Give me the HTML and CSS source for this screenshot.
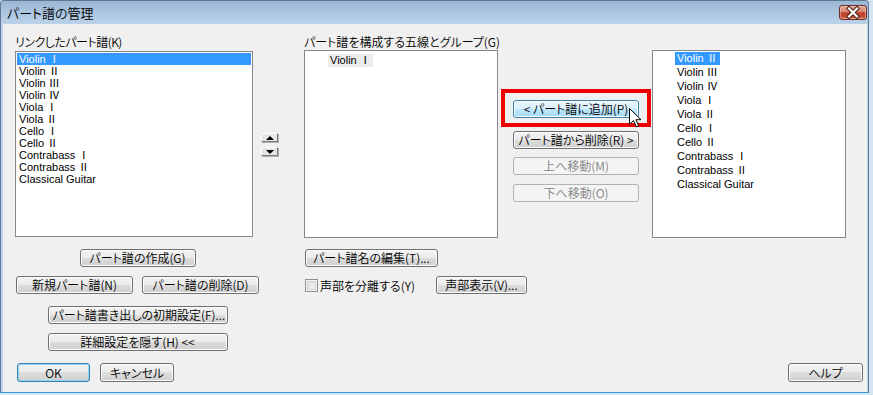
FILE: index.html
```html
<!DOCTYPE html>
<html lang="ja">
<head>
<meta charset="utf-8">
<title>パート譜の管理</title>
<link rel="stylesheet" href="styles.css">
</head>
<body>
<div class="window">
  <div class="titlebar">
    <span class="title">パート譜の管理</span>
    <button class="close" aria-label="閉じる">
      <svg width="26" height="13" viewBox="0 0 26 13">
        <path d="M9 2.5 L17 10.5 M17 2.5 L9 10.5" stroke="#4a1d16" stroke-width="4.2" stroke-linecap="square" fill="none"/>
        <path d="M9 2.5 L17 10.5 M17 2.5 L9 10.5" stroke="#ffffff" stroke-width="2.2" stroke-linecap="square" fill="none"/>
      </svg>
    </button>
  </div>
  <div class="frame">
    <div class="client">
      <div class="top">
        <div class="col-linked">
          <div class="label narrow">リンクしたパート譜(K)</div>
          <ul class="listbox linked">
            <li class="sel">Violin Ⅰ</li>
            <li>Violin Ⅱ</li>
            <li>Violin Ⅲ</li>
            <li>Violin Ⅳ</li>
            <li>Viola Ⅰ</li>
            <li>Viola Ⅱ</li>
            <li>Cello Ⅰ</li>
            <li>Cello Ⅱ</li>
            <li>Contrabass Ⅰ</li>
            <li>Contrabass Ⅱ</li>
            <li>Classical Guitar</li>
          </ul>
        </div>
        <div class="spin">
          <button class="spin-btn up" aria-label="上へ"></button>
          <button class="spin-btn down" aria-label="下へ"></button>
        </div>
        <div class="col-staves">
          <div class="label">パート譜を構成する五線とグループ(G)</div>
          <ul class="listbox tree staves">
            <li><span class="item inactive">Violin Ⅰ</span></li>
          </ul>
        </div>
        <div class="actions">
          <div class="marked">
            <button class="btn hot">&lt; パート譜に追加(P)</button>
            <svg class="cursor" width="13" height="20" viewBox="0 0 13 20">
              <path d="M0.5 0.5 L0.5 16.5 L4.5 12.5 L7.2 18.8 L9.6 17.8 L7 11.7 L12 11.7 Z" fill="#ffffff" stroke="#000000" stroke-width="1" stroke-linejoin="miter"/>
            </svg>
          </div>
          <button class="btn remove">パート譜から削除(R) &gt;</button>
          <button class="btn move-up" disabled>上へ移動(M)</button>
          <button class="btn move-down" disabled>下へ移動(O)</button>
        </div>
        <div class="col-avail">
          <ul class="listbox tree avail">
            <li><span class="item sel">Violin Ⅱ</span></li>
            <li><span class="item">Violin Ⅲ</span></li>
            <li><span class="item">Violin Ⅳ</span></li>
            <li><span class="item">Viola Ⅰ</span></li>
            <li><span class="item">Viola Ⅱ</span></li>
            <li><span class="item">Cello Ⅰ</span></li>
            <li><span class="item">Cello Ⅱ</span></li>
            <li><span class="item">Contrabass Ⅰ</span></li>
            <li><span class="item">Contrabass Ⅱ</span></li>
            <li><span class="item">Classical Guitar</span></li>
          </ul>
        </div>
      </div>

      <div class="bottom">
        <div class="left-actions">
          <button class="btn w-create">パート譜の作成(G)</button>
          <div class="pair">
            <button class="btn w-pair">新規パート譜(N)</button>
            <button class="btn w-pair">パート譜の削除(D)</button>
          </div>
          <button class="btn w-wide gap12">パート譜書き出しの初期設定(F)...</button>
          <button class="btn w-wide gap9">詳細設定を隠す(H) &lt;&lt;</button>
        </div>
        <div class="mid-actions">
          <button class="btn w-rename">パート譜名の編集(T)...</button>
          <div class="check-row">
            <label class="check"><span class="box"></span>声部を分離する(Y)</label>
            <button class="btn w-voice">声部表示(V)...</button>
          </div>
        </div>
      </div>

      <div class="footer">
        <button class="btn default w-ok">OK</button>
        <button class="btn w-cancel">キャンセル</button>
        <button class="btn w-help">ヘルプ</button>
      </div>
    </div>
  </div>
</div>
</body>
</html>
```
FILE: styles.css
```css
* { box-sizing: border-box; }

html, body {
  margin: 0;
  padding: 0;
}

body {
  width: 873px;
  height: 395px;
  overflow: hidden;
  background: #d6e5f4;
  font-family: "Noto Sans CJK JP", "Noto Sans", sans-serif;
  font-size: 12px;
  font-weight: 350;
  font-feature-settings: "palt";
  color: #000;
}

.window {
  width: 869px;
  height: 393px;
  display: flex;
  flex-direction: column;
  border: 1px solid #5f7894;
  border-bottom-color: #3d97dc;
  border-radius: 4px 4px 0 0;
  background: #bcd3eb;
}

.titlebar {
  height: 23px;
  flex: none;
  display: flex;
  align-items: flex-start;
  padding-left: 6px;
  background: linear-gradient(#9bb6d4, #abc4df 50%, #bad1e9);
  border-radius: 3px 3px 0 0;
}

.title {
  line-height: 24px;
  font-size: 13px;
  color: #000;
}

.close {
  margin: 4px 1px 0 auto;
  width: 28px;
  height: 15px;
  padding: 0;
  border: 1px solid #6a2c22;
  border-radius: 3px;
  background: linear-gradient(#e6ab98, #d48570 45%, #bb4129 52%, #c44f35 85%, #d97a5e);
  box-shadow: inset 0 0 0 1px rgba(255, 220, 205, 0.45);
  display: flex;
  align-items: center;
  justify-content: center;
}

.close svg { display: block; }

.frame {
  flex: 1;
  padding: 0 1px 0 2px;
  display: flex;
}

.client {
  flex: 1;
  background: #f0f0f0;
  padding: 10px 0 0 12px;
  display: flex;
  flex-direction: column;
}

/* top area */
.top {
  display: flex;
  align-items: flex-start;
}

.label {
  height: 16px;
  line-height: 16px;
  white-space: nowrap;
}

.label.narrow { letter-spacing: -0.5px; }

.listbox {
  list-style: none;
  margin: 0;
  background: #fff;
  border: 1px solid #828790;
  overflow: hidden;
  font-family: "Liberation Sans", "Noto Sans CJK JP", sans-serif;
  font-size: 11px;
  font-weight: 400;
}

.col-linked { width: 238px; }

.linked {
  margin-top: 1px;
  height: 186px;
  padding: 1px;
}

.linked li {
  height: 12px;
  line-height: 12px;
  padding-left: 2px;
  white-space: nowrap;
}

.linked li.sel {
  background: #3399ff;
  color: #fff;
}

.spin {
  margin: 99px 0 0 8px;
  width: 17px;
  display: flex;
  flex-direction: column;
  gap: 5px;
}

.spin-btn {
  width: 17px;
  height: 9px;
  padding: 0;
  border: 1px solid;
  border-color: #ffffff #7a7a7a #7a7a7a #ffffff;
  background: #e6e6e6;
  box-shadow: 1px 1px 0 #b0b0b0;
  display: flex;
  align-items: center;
  justify-content: center;
}

.spin-btn::before {
  content: "";
  width: 0;
  height: 0;
  border-left: 4px solid transparent;
  border-right: 4px solid transparent;
}

.spin-btn.up::before { border-bottom: 4px solid #000; }
.spin-btn.down::before { border-top: 4px solid #000; }

.col-staves {
  margin-left: 26px;
  width: 194px;
}

.staves {
  height: 188px;
  padding: 3px 0 0 23px;
}

.tree li {
  height: 14px;
  line-height: 13px;
  white-space: nowrap;
}

.tree .item {
  display: inline-block;
  height: 13px;
  padding: 0 2px;
}

.item.inactive { background: #ececec; }

.item.sel {
  background: #3399ff;
  color: #fff;
}

.actions {
  margin: 66px 0 0 15px;
  width: 126px;
  display: flex;
  flex-direction: column;
}

.marked { position: relative; }

.marked::after {
  content: "";
  position: absolute;
  top: -11px;
  bottom: -9px;
  left: -12px;
  right: -12px;
  border: 4px solid #f00000;
  pointer-events: none;
}

.cursor {
  position: absolute;
  left: 116px;
  top: 8px;
  z-index: 2;
}

.actions .btn { width: 126px; }
.actions .remove { margin-top: 13px; }
.actions .move-up { margin-top: 8px; }
.actions .move-down { margin-top: 9px; }

.col-avail {
  margin-left: 13px;
  width: 194px;
}

.avail {
  margin-top: 16px;
  height: 188px;
  padding: 1px 0 0 22px;
}

/* buttons */
.btn {
  display: block;
  height: 18px;
  padding: 0 4px;
  font: inherit;
  font-size: 12px;
  line-height: 16px;
  color: #000;
  white-space: nowrap;
  border: 1px solid #707070;
  border-radius: 3px;
  background: linear-gradient(#f2f2f2, #ebebeb 50%, #dddddd 50%, #cfcfcf);
  box-shadow: inset 0 0 0 1px #fcfcfc;
  text-align: center;
}

.btn.hot {
  width: 126px;
  border-color: #3c7fb1;
  background: linear-gradient(#eaf6fd, #d9f0fc 50%, #bee6fd 50%, #a7d9f5);
}

.btn:disabled {
  border-color: #adb2b5;
  background: #f4f4f4;
  box-shadow: none;
  color: #838383;
}

.btn.default {
  border-color: #3c7fb1;
  box-shadow: inset 0 0 0 1px #8fd7f6;
}

/* bottom area */
.bottom {
  display: flex;
  margin-top: 11px;
}

.left-actions {
  width: 245px;
  display: flex;
  flex-direction: column;
  align-items: center;
}

.w-create { width: 116px; }

.pair {
  margin-top: 9px;
  display: flex;
  gap: 9px;
}

.w-pair { width: 117px; }
.w-wide { width: 180px; }
.gap12 { margin-top: 12px; }
.gap9 { margin-top: 9px; }

.mid-actions {
  margin-left: 45px;
  display: flex;
  flex-direction: column;
}

.w-rename { width: 133px; }

.check-row {
  margin-top: 9px;
  width: 222px;
  height: 18px;
  display: flex;
  align-items: center;
}

.check {
  display: flex;
  align-items: center;
  gap: 2px;
  white-space: nowrap;
}

.box {
  width: 13px;
  height: 13px;
  border: 1px solid #8f8f8f;
  background: linear-gradient(135deg, #dcdcdc, #f6f6f6);
  box-shadow: inset 0 0 0 1px #f4f4f4, inset 0 0 0 2px #d2d2d2;
}

.w-voice {
  width: 91px;
  margin-left: auto;
}

.footer {
  margin-top: 12px;
  padding: 0 4px 0 2px;
  display: flex;
}

.footer .btn { height: 19px; }
.w-ok { width: 73px; }
.w-cancel { width: 74px; margin-left: 10px; }
.w-help { width: 75px; margin-left: auto; }
```
